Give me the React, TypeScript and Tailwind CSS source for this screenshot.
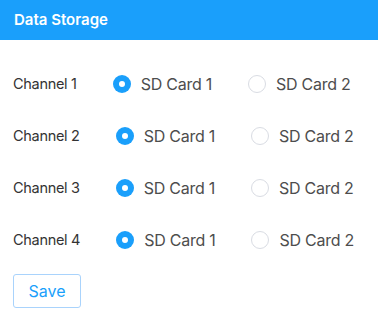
import { useState } from "react";

const channels = ["Channel 1", "Channel 2", "Channel 3", "Channel 4"];

function Radio({ checked, label, onClick }: { checked: boolean; label: string; onClick: () => void }) {
  return (
    <button type="button" onClick={onClick} className="mr-[36px] flex shrink-0 items-center gap-[10px] whitespace-nowrap">
      {checked ? (
        <span className="flex h-[18px] w-[18px] shrink-0 items-center justify-center rounded-full bg-[#1a9ffb]">
          <span className="h-[6px] w-[6px] rounded-full bg-white" />
        </span>
      ) : (
        <span className="h-[18px] w-[18px] shrink-0 rounded-full border border-[#d9dce3] bg-white" />
      )}
      <span className="text-[16px] tracking-[-0.25px] text-[#4d4d4d]">{label}</span>
    </button>
  );
}

export default function App() {
  const [sel, setSel] = useState<number[]>([1, 1, 1, 1]);

  return (
    <div className="h-[319px] w-[378px] overflow-hidden bg-white font-['Inter',sans-serif]">
      <div className="flex h-[40px] items-center bg-[#1a9ffb] px-[14px]">
        <h1 className="text-[15px] font-semibold text-white">Data Storage</h1>
      </div>

      <div className="px-[13px] pt-[18px]">
        {channels.map((c, i) => (
          <div key={c} className="flex h-[52px] items-center whitespace-nowrap">
            <span className="mr-[36px] shrink-0 text-[14.5px] tracking-[-0.3px] text-[#333]">{c}</span>
            <Radio
              checked={sel[i] === 1}
              label="SD Card 1"
              onClick={() => setSel((s) => s.map((v, j) => (j === i ? 1 : v)))}
            />
            <Radio
              checked={sel[i] === 2}
              label="SD Card 2"
              onClick={() => setSel((s) => s.map((v, j) => (j === i ? 2 : v)))}
            />
          </div>
        ))}
        <button
          type="button"
          className="mt-[8px] h-[34px] w-[68px] rounded-[3px] border border-[#a9d3fc] bg-white text-[16px] text-[#1a9ffb]"
        >
          Save
        </button>
      </div>
    </div>
  );
}
